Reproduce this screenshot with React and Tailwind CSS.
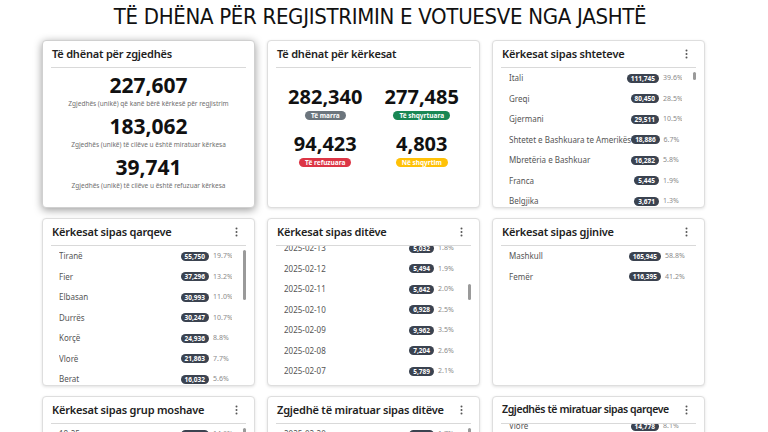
import React from 'react';

const font = { fontFamily: '"Noto Sans", "Open Sans", Arial, sans-serif' };

const shtetet = [
  ['Itali', '111,745', '39.6%'],
  ['Greqi', '80,450', '28.5%'],
  ['Gjermani', '29,511', '10.5%'],
  ['Shtetet e Bashkuara te Amerikës', '18,886', '6.7%'],
  ['Mbretëria e Bashkuar', '16,282', '5.8%'],
  ['Franca', '5,445', '1.9%'],
  ['Belgjika', '3,671', '1.3%'],
];

const qarqet = [
  ['Tiranë', '55,750', '19.7%'],
  ['Fier', '37,296', '13.2%'],
  ['Elbasan', '30,993', '11.0%'],
  ['Durrës', '30,247', '10.7%'],
  ['Korçë', '24,936', '8.8%'],
  ['Vlorë', '21,863', '7.7%'],
  ['Berat', '16,032', '5.6%'],
];

const ditet = [
  ['2025-02-13', '5,032', '1.8%'],
  ['2025-02-12', '5,494', '1.9%'],
  ['2025-02-11', '5,642', '2.0%'],
  ['2025-02-10', '6,928', '2.5%'],
  ['2025-02-09', '9,962', '3.5%'],
  ['2025-02-08', '7,204', '2.6%'],
  ['2025-02-07', '5,789', '2.1%'],
];

const gjinite = [
  ['Mashkull', '165,945', '58.8%'],
  ['Femër', '116,395', '41.2%'],
];

const moshat = [['18-25', '41,210', '14.6%']];
const ditetMiratuar = [['2025-02-20', '3,112', '1.7%']];
const qarqetMiratuar = [['Vlorë', '14,778', '8.1%']];

function Kebab() {
  return (
    <svg width="3" height="10" viewBox="0 0 3 10" className="text-[#555] shrink-0">
      <circle cx="1.5" cy="1.5" r="1" fill="currentColor" />
      <circle cx="1.5" cy="5" r="1" fill="currentColor" />
      <circle cx="1.5" cy="8.5" r="1" fill="currentColor" />
    </svg>
  );
}

function Card({ title, menu, strong, small, children }) {
  return (
    <div
      className={`h-[168px] bg-white rounded-[4px] border overflow-hidden flex flex-col ${
        strong ? 'border-[#d0d0d0] shadow-[0_2px_9px_rgba(0,0,0,0.4)]' : 'border-[#dedede] shadow-[0_1px_3px_rgba(0,0,0,0.12)]'
      }`}
    >
      <div className="mx-[8px] h-[27px] shrink-0 flex items-center justify-between gap-2 border-b border-[#d9d9d9] pl-[1px] pr-[8px]">
        <span
          className={`font-semibold text-[#222] whitespace-nowrap ${
            small ? 'text-[10.5px] tracking-[-0.4px]' : 'text-[11px] tracking-[-0.2px]'
          }`}
        >
          {title}
        </span>
        {menu && <Kebab />}
      </div>
      {children}
    </div>
  );
}

function Row({ item, wide }) {
  const [label, count, pct] = item;
  return (
    <div className="h-[20.5px] flex items-center">
      <span className="flex-1 text-[8px] text-[#555] whitespace-nowrap">{label}</span>
      <span className="rounded-full bg-[#3b4350] text-white text-[6.5px] font-bold leading-[9px] px-[4px]">{count}</span>
      <span className={`text-[7px] text-[#8a8a8a] ml-[4px] ${wide ? 'w-[22px]' : 'w-[19px]'}`}>{pct}</span>
    </div>
  );
}

function ListCard({ title, items, offset, thumbTop, thumbH, scroll = true, small }) {
  return (
    <Card title={title} menu small={small}>
      <div className="flex flex-1 pl-[16px] pr-[8px] overflow-hidden">
        <div className="flex-1 overflow-hidden">
          <div className={offset}>
            {items.map((it) => (
              <Row key={it[0]} item={it} wide={!scroll} />
            ))}
          </div>
        </div>
        {scroll ? (
          <div className="w-[3px] ml-[11px] flex flex-col">
            <div className={`${thumbTop} ${thumbH} w-[3px] rounded-full bg-[#9a9a9a]`} />
          </div>
        ) : (
          <div className="w-[3px] ml-[6px]" />
        )}
      </div>
    </Card>
  );
}

function Stat({ value, label }) {
  return (
    <div className="flex flex-col items-center">
      <div className="text-[21px] font-bold leading-[24px] text-[#111]">{value}</div>
      <div className="text-[6.5px] text-[#707070] leading-[10px] mt-[2px]">{label}</div>
    </div>
  );
}

function Badged({ value, label, color }) {
  return (
    <div className="flex flex-col items-center">
      <div className="text-[20px] font-bold leading-[24px] text-[#111]">{value}</div>
      <span className={`mt-[2px] rounded-full text-white text-[6.5px] font-bold leading-[9px] px-[6px] ${color}`}>{label}</span>
    </div>
  );
}

export default function App() {
  return (
    <div className="h-screen overflow-hidden bg-white" style={font}>
      <h1
        className="w-[760px] text-center text-[22px] leading-[32px] pt-[1px] text-[#111] tracking-[-0.3px]"
        style={{ fontFamily: '"DejaVu Sans Condensed", "Liberation Sans Narrow", "Noto Sans", sans-serif' }}
      >
        TË DHËNA PËR REGJISTRIMIN E VOTUESVE NGA JASHTË
      </h1>
      <div className="ml-[42px] mt-[7px] grid grid-cols-[213px_213px_213px] gap-x-[12px] gap-y-[10px]">
        <Card title="Të dhënat për zgjedhës" strong>
          <div className="flex flex-col gap-[5px] pt-[5px]">
            <Stat value="227,607" label="Zgjedhës (unikë) që kanë bërë kërkesë për regjistrim" />
            <Stat value="183,062" label="Zgjedhës (unikë) të cilëve u është miratuar kërkesa" />
            <Stat value="39,741" label="Zgjedhës (unikë) të cilëve u është refuzuar kërkesa" />
          </div>
        </Card>
        <Card title="Të dhënat për kërkesat">
          <div className="grid grid-cols-2 gap-y-[12px] px-[9px] pt-[17px]">
            <Badged value="282,340" label="Të marra" color="bg-[#6c757d]" />
            <Badged value="277,485" label="Të shqyrtuara" color="bg-[#198754]" />
            <Badged value="94,423" label="Të refuzuara" color="bg-[#dc3545]" />
            <Badged value="4,803" label="Në shqyrtim" color="bg-[#ffc107]" />
          </div>
        </Card>
        <ListCard title="Kërkesat sipas shteteve" items={shtetet} offset="mt-[0px]" thumbTop="mt-[4px]" thumbH="h-[8px]" />
        <ListCard title="Kërkesat sipas qarqeve" items={qarqet} offset="mt-[0px]" thumbTop="mt-[4px]" thumbH="h-[50px]" />
        <ListCard title="Kërkesat sipas ditëve" items={ditet} offset="-mt-[8px]" thumbTop="mt-[38px]" thumbH="h-[16px]" />
        <ListCard title="Kërkesat sipas gjinive" items={gjinite} offset="mt-[0px]" scroll={false} />
        <ListCard title="Kërkesat sipas grup moshave" items={moshat} offset="mt-[0px]" thumbTop="mt-[4px]" thumbH="h-[20px]" />
        <ListCard title="Zgjedhë të miratuar sipas ditëve" items={ditetMiratuar} offset="mt-[0px]" thumbTop="mt-[4px]" thumbH="h-[20px]" />
        <ListCard title="Zgjedhës të miratuar sipas qarqeve" items={qarqetMiratuar} offset="-mt-[8px]" thumbTop="mt-[60px]" thumbH="h-[20px]" small />
      </div>
    </div>
  );
}
